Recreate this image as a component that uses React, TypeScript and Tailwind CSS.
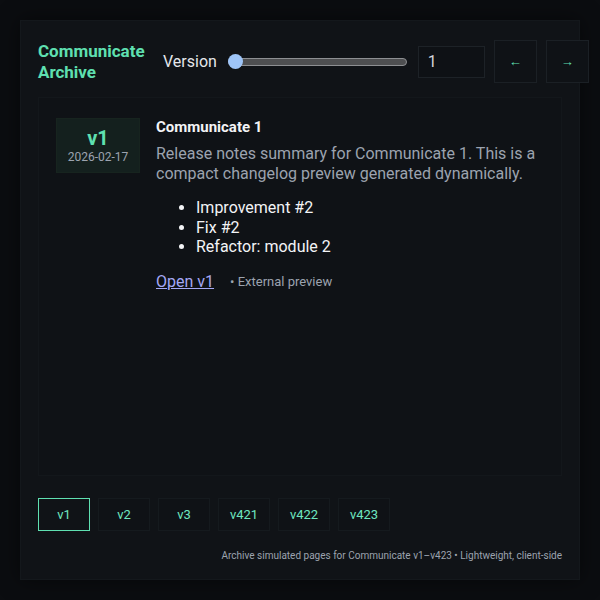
import React, { useState } from "react";

const versions = ["v1", "v2", "v3", "v421", "v422", "v423"];

const App = () => {
  const [version, setVersion] = useState(1);

  return (
    <div
      className="w-[600px] h-[600px] bg-[#0b0d10] p-5 overflow-hidden"
      style={{ fontFamily: "Roboto, 'Noto Sans', sans-serif" }}
    >
      <div className="w-[560px] h-[560px] bg-[#101317] border border-[#14181c] flex flex-col pt-[19px] pb-[16px] shadow-[0_0_20px_rgba(0,0,0,0.5)]">
        {/* header */}
        <div className="flex items-center pl-[17px] h-[43px] whitespace-nowrap">
          <h1 className="w-[113px] shrink-0 text-[17px] leading-[21px] font-bold text-[#5fe0b1]">
            Communicate
            <br />
            Archive
          </h1>
          <span className="ml-[12px] shrink-0 text-[16px] text-[#e5e7eb]">Version</span>
          <div className="ml-[11px] w-[179px] shrink-0 h-4 relative flex items-center">
            <div className="w-full h-[8px] rounded-full bg-[#4e4f51] border border-[#8d8f92]" />
            <div className="absolute left-0 w-[15px] h-[15px] rounded-full bg-[#9ec5f8]" />
          </div>
          <input
            value={version}
            onChange={(e) => setVersion(Number(e.target.value))}
            className="ml-[11px] w-[67px] shrink-0 h-[32px] bg-[#0e1115] border border-[#1d2227] px-[9px] text-[16px] text-[#d1d5db] outline-none"
          />
          <button className="ml-[9px] w-[43px] h-[43px] shrink-0 border border-[#1b2025] bg-[#0f1216] text-[#5fe0b1] text-[13px]">
            ←
          </button>
          <button className="ml-[9px] w-[43px] h-[43px] shrink-0 border border-[#1b2025] bg-[#0f1216] text-[#5fe0b1] text-[13px]">
            →
          </button>
        </div>

        {/* entry panel */}
        <div className="mx-[17px] mt-[14px] flex-1 border border-[#13171b] bg-[#0f1216] px-[17px] pt-[20px] flex gap-4">
          <div className="w-[84px] h-[55px] shrink-0 bg-[#14201e] border border-[#17241f] flex flex-col items-center justify-center">
            <span className="text-[20px] leading-[22px] font-bold text-[#5fe0b1]">v1</span>
            <span className="text-[12px] leading-[16px] text-[#9ca3af]">2026-02-17</span>
          </div>
          <div className="flex flex-col">
            <h2 className="text-[15px] leading-[20px] font-bold text-[#f3f4f6] -mt-[1px]">
              Communicate 1
            </h2>
            <p className="mt-[7px] text-[16px] leading-[19.5px] text-[#9ca3af] w-[390px]">
              Release notes summary for Communicate 1. This is a compact changelog
              preview generated dynamically.
            </p>
            <ul className="mt-[15px] pl-[40px] list-disc text-[16px] leading-[19.5px] text-[#f3f4f6]">
              <li>Improvement #2</li>
              <li>Fix #2</li>
              <li>Refactor: module 2</li>
            </ul>
            <div className="mt-[13px] flex items-center gap-[16px]">
              <a href="#" className="text-[16px] text-[#a5a8f5] underline">
                Open v1
              </a>
              <span className="text-[13px] text-[#9ca3af]">• External preview</span>
            </div>
          </div>
        </div>

        {/* version chips */}
        <div className="mt-[22px] pl-[17px] flex gap-[8px]">
          {versions.map((v, i) => (
            <button
              key={v}
              onClick={() => setVersion(i + 1)}
              className={
                i === 0
                  ? "w-[52px] h-[33px] border border-[#5fe0b1] text-[13px] text-[#6ee7c0]"
                  : "w-[52px] h-[33px] border border-[#151a1e] bg-[#0f1216] text-[13px] text-[#6ee7c0]"
              }
            >
              {v}
            </button>
          ))}
        </div>

        <div className="mt-[18px] pr-[17px] text-right text-[10px] leading-[14px] text-[#9ca3af]">
          Archive simulated pages for Communicate v1–v423 • Lightweight, client-side
        </div>
      </div>
    </div>
  );
};

export default App;
